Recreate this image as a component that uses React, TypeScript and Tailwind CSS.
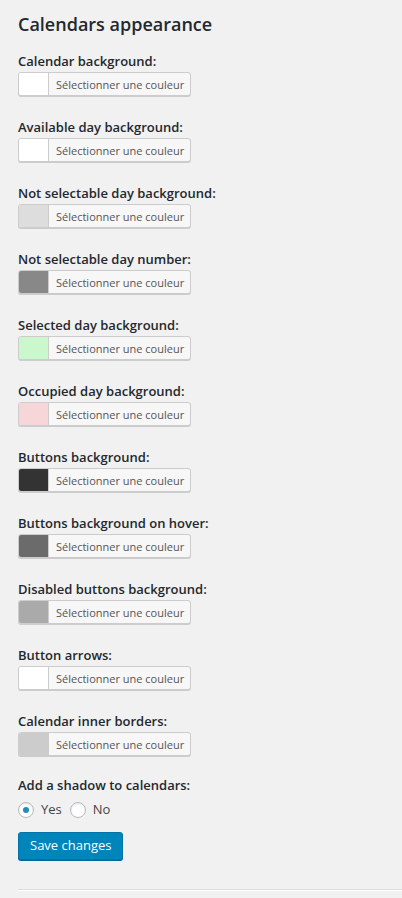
const colors = [
  { label: 'Calendar background:', color: '#ffffff' },
  { label: 'Available day background:', color: '#ffffff' },
  { label: 'Not selectable day background:', color: '#dddddd' },
  { label: 'Not selectable day number:', color: '#888888' },
  { label: 'Selected day background:', color: '#caf7cb' },
  { label: 'Occupied day background:', color: '#f7d6da' },
  { label: 'Buttons background:', color: '#333333' },
  { label: 'Buttons background on hover:', color: '#6b6b6b' },
  { label: 'Disabled buttons background:', color: '#aaaaaa' },
  { label: 'Button arrows:', color: '#ffffff' },
  { label: 'Calendar inner borders:', color: '#cccccc' },
]

function ColorPicker({ color }: { color: string }) {
  return (
    <button
      type="button"
      className="flex h-6 w-[173px] items-stretch overflow-hidden rounded-[3px] border border-[#cccccc] bg-[#f7f7f7] p-0 shadow-[0_1px_0_#cccccc]"
    >
      <span className="block w-[30px] border-r border-[#cccccc]" style={{ background: color }} />
      <span className="flex flex-1 items-center pl-[7px] text-[11px] leading-none text-[#555555]">
        Sélectionner une couleur
      </span>
    </button>
  )
}

function Radio({ checked, label }: { checked?: boolean; label: string }) {
  return (
    <label className="flex items-center gap-[7px]">
      <span className="flex h-4 w-4 items-center justify-center rounded-full border border-[#b4b9be] bg-white shadow-[inset_0_1px_2px_rgba(0,0,0,0.1)]">
        {checked && <span className="block h-[6px] w-[6px] rounded-full bg-[#1e8cbe]" />}
      </span>
      <span className="text-[13px] text-[#444444]">{label}</span>
    </label>
  )
}

export default function App() {
  return (
    <div className="min-h-[898px] bg-[#f1f1f1] pt-[13px] pl-[18px] font-['Open_Sans',sans-serif] text-[#23282d]">
      {/* Title */}
      <h2 className="text-[18px] font-semibold leading-[23px]">Calendars appearance</h2>

      {/* Colour pickers */}
      <div className="mt-[18px] flex flex-col gap-[24px]">
        {colors.map((c) => (
          <div key={c.label} className="flex flex-col gap-[4px]">
            <p className="text-[13px] font-semibold leading-[14px]">{c.label}</p>
            <ColorPicker color={c.color} />
          </div>
        ))}
      </div>

      {/* Shadow option */}
      <div className="mt-[22px]">
        <p className="text-[13px] font-semibold leading-[14px]">Add a shadow to calendars:</p>
        <div className="mt-[8px] flex items-center gap-[8px]">
          <Radio checked label="Yes" />
          <Radio label="No" />
        </div>
      </div>

      <button
        type="button"
        className="mt-[12px] h-7 rounded-[3px] border border-[#0073aa] bg-[#0085ba] px-[11px] text-[13px] text-white shadow-[0_1px_0_#006799]"
      >
        Save changes
      </button>

      <div className="mt-[29px] border-t border-[#dddddd] border-b border-b-white" />
    </div>
  )
}
